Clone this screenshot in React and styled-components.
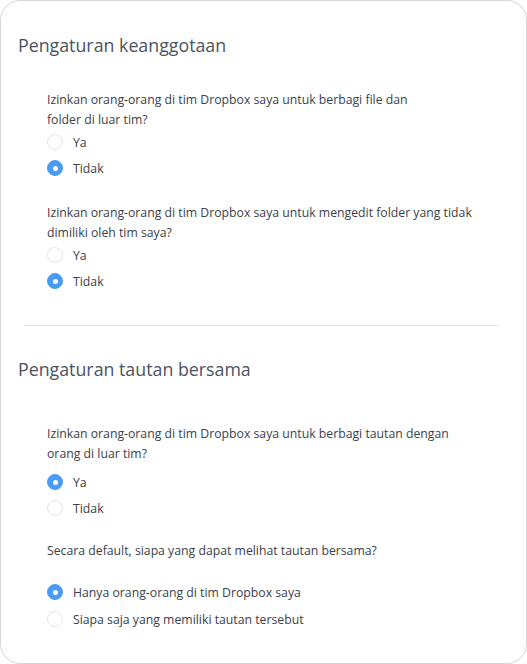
import React from 'react';
import styled, { createGlobalStyle } from 'styled-components';

const GlobalStyle = createGlobalStyle`
  html, body {
    margin: 0;
    padding: 0;
    background: #ffffff;
  }
  body {
    font-family: 'Open Sans', 'Noto Sans', Arial, sans-serif;
  }
`;

const sections = [
  {
    title: 'Pengaturan keanggotaan',
    questions: [
      {
        text: ['Izinkan orang-orang di tim Dropbox saya untuk berbagi file dan', 'folder di luar tim?'],
        gap: 33,
        listGap: 0,
        options: ['Ya', 'Tidak'],
        selected: 1,
      },
      {
        text: ['Izinkan orang-orang di tim Dropbox saya untuk mengedit folder yang tidak', 'dimiliki oleh tim saya?'],
        gap: 22,
        listGap: 0,
        options: ['Ya', 'Tidak'],
        selected: 1,
      },
    ],
  },
  {
    title: 'Pengaturan tautan bersama',
    questions: [
      {
        text: ['Izinkan orang-orang di tim Dropbox saya untuk berbagi tautan dengan', 'orang di luar tim?'],
        gap: 43,
        listGap: 6,
        options: ['Ya', 'Tidak'],
        selected: 0,
      },
      {
        text: ['Secara default, siapa yang dapat melihat tautan bersama?'],
        gap: 20,
        listGap: 18,
        options: ['Hanya orang-orang di tim Dropbox saya', 'Siapa saja yang memiliki tautan tersebut'],
        selected: 0,
        rowHeight: 27,
      },
    ],
  },
];

export default function App() {
  return (
    <>
      <GlobalStyle />
      <Card>
        {sections.map((section, si) => (
          <React.Fragment key={section.title}>
            {si > 0 && <Divider />}
            <Section>
              <Title>{section.title}</Title>
              {section.questions.map((q, qi) => (
                <Question key={qi} gap={q.gap}>
                  <Prompt>
                    {q.text.map((line) => (
                      <span key={line}>{line}</span>
                    ))}
                  </Prompt>
                  <Options listGap={q.listGap}>
                    {q.options.map((opt, oi) => (
                      <Option key={opt} rowHeight={q.rowHeight || 26}>
                        <Radio checked={oi === q.selected} />
                        <Label>{opt}</Label>
                      </Option>
                    ))}
                  </Options>
                </Question>
              ))}
            </Section>
          </React.Fragment>
        ))}
      </Card>
    </>
  );
}

const Card = styled.div`
  box-sizing: border-box;
  width: 527px;
  height: 664px;
  border: 1px solid #d3d7dd;
  border-radius: 20px;
  background: #fff;
  padding-top: 32px;
  overflow: hidden;
`;

const Section = styled.section`
  display: flex;
  flex-direction: column;
`;

const Title = styled.h2`
  margin: 0 0 0 17px;
  font-size: 17.8px;
  line-height: 24px;
  font-weight: 400;
  color: #4b5360;
`;

const Question = styled.div`
  margin-top: ${(p) => p.gap}px;
  padding-left: 46px;
`;

const Prompt = styled.p`
  margin: 0;
  font-size: 12.25px;
  line-height: 19.5px;
  color: #3b414b;

  span {
    display: block;
  }
`;

const Options = styled.div`
  margin-top: ${(p) => p.listGap}px;
  display: flex;
  flex-direction: column;
`;

const Option = styled.label`
  display: flex;
  align-items: center;
  gap: 10px;
  height: ${(p) => p.rowHeight}px;
`;

const Radio = styled.span`
  box-sizing: border-box;
  width: 16px;
  height: 16px;
  border-radius: 50%;
  flex-shrink: 0;
  border: 1px solid ${(p) => (p.checked ? '#4a9bf5' : '#e2e5e9')};
  background: ${(p) => (p.checked ? '#4a9bf5' : '#fff')};
  display: flex;
  align-items: center;
  justify-content: center;

  &::after {
    content: '';
    display: ${(p) => (p.checked ? 'block' : 'none')};
    width: 5px;
    height: 5px;
    border-radius: 50%;
    background: #fff;
  }
`;

const Label = styled.span`
  font-size: 12.25px;
  color: #3b414b;
`;

const Divider = styled.hr`
  margin: 31px 27px 31px 23px;
  border: 0;
  border-top: 1px solid #e6e9ec;
`;
